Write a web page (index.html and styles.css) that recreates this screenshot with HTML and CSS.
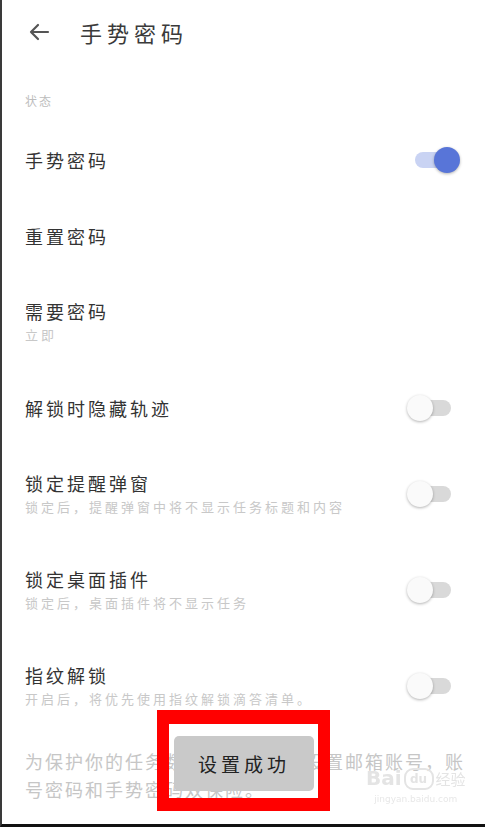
FILE: index.html
```html
<!DOCTYPE html>
<html lang="zh-CN">

<head>
    <meta charset="UTF-8">
    <title>手势密码</title>
    <meta name="viewport" content="width=device-width, initial-scale=1.0">
    <link rel="stylesheet" href="styles.css">
</head>

<body>
    <div class="screen">

        <!-- header -->
        <div class="topbar">
            <svg class="back" width="24" height="24" viewBox="0 0 24 24">
                <path d="M21 12H4M11 5l-7 7 7 7" fill="none" stroke="#555" stroke-width="2.2" stroke-linecap="round" stroke-linejoin="round" />
            </svg>
            <h1>手势密码</h1>
        </div>

        <div class="section-label">状态</div>

        <div class="row">
            <div class="row-text">
                <div class="row-title">手势密码</div>
            </div>
            <div class="switch on"><span class="track"></span><span class="thumb"></span></div>
        </div>

        <div class="row">
            <div class="row-text">
                <div class="row-title">重置密码</div>
            </div>
        </div>

        <div class="row double">
            <div class="row-text">
                <div class="row-title">需要密码</div>
                <div class="row-sub">立即</div>
            </div>
        </div>

        <div class="row">
            <div class="row-text">
                <div class="row-title">解锁时隐藏轨迹</div>
            </div>
            <div class="switch"><span class="track"></span><span class="thumb"></span></div>
        </div>

        <div class="row double">
            <div class="row-text">
                <div class="row-title">锁定提醒弹窗</div>
                <div class="row-sub">锁定后，提醒弹窗中将不显示任务标题和内容</div>
            </div>
            <div class="switch"><span class="track"></span><span class="thumb"></span></div>
        </div>

        <div class="row double">
            <div class="row-text">
                <div class="row-title">锁定桌面插件</div>
                <div class="row-sub">锁定后，桌面插件将不显示任务</div>
            </div>
            <div class="switch"><span class="track"></span><span class="thumb"></span></div>
        </div>

        <div class="row double">
            <div class="row-text">
                <div class="row-title">指纹解锁</div>
                <div class="row-sub">开启后，将优先使用指纹解锁滴答清单。</div>
            </div>
            <div class="switch"><span class="track"></span><span class="thumb"></span></div>
        </div>

        <p class="note">为保护你的任务数据安全，建议设置邮箱账号，账号密码和手势密码双保险。</p>
    </div>

    <!-- toast + annotation on top -->
    <div class="toast">设置成功</div>
    <div class="mark"></div>

    <div class="watermark">
        <div class="wm-logo">
            <span class="wm-bai">Bai</span>
            <span class="wm-paw">du</span>
            <span class="wm-jy">经验</span>
        </div>
        <div class="wm-url">jingyan.baidu.com</div>
    </div>
</body>

</html>
```

FILE: styles.css
```css
html,
body {
    margin: 0;
    height: 100%;
}

body {
    font-family: "Noto Sans CJK SC", "Noto Sans", sans-serif;
    background: #fff;
    color: #333;
    overflow: hidden;
}

.screen {
    height: 100vh;
    box-sizing: border-box;
    border-left: 2px solid #3a3a3a;
    border-bottom: 3px solid #111;
    overflow: hidden;
}

.topbar {
    height: 64px;
    display: flex;
    align-items: center;
    padding-left: 25px;
}

.back {
    margin-right: 29px;
}

h1 {
    margin: 0;
    font-size: 22px;
    font-weight: normal;
    letter-spacing: 5px;
    color: #3a3a3a;
}

.section-label {
    padding: 30px 0 14px 23px;
    font-size: 12px;
    line-height: 14px;
    letter-spacing: 2px;
    color: #bdbdbd;
}

.row {
    display: flex;
    align-items: center;
    justify-content: space-between;
    padding: 26px 24px 26px 23px;
}

.row.double {
    padding-top: 25px;
    padding-bottom: 26px;
}

.row-title {
    font-size: 18px;
    line-height: 24px;
    letter-spacing: 3px;
    color: #333;
}

.row-sub {
    margin-top: 3px;
    font-size: 13px;
    line-height: 18px;
    letter-spacing: 3px;
    color: #c8c8c8;
}

.switch {
    position: relative;
    width: 54px;
    height: 26px;
    margin: -1px 0;
    flex-shrink: 0;
}

.switch .track {
    position: absolute;
    left: 8px;
    right: 10px;
    top: 5px;
    height: 16px;
    border-radius: 8px;
    background: #d9d9d9;
}

.switch .thumb {
    position: absolute;
    left: 0;
    top: 0;
    width: 26px;
    height: 26px;
    border-radius: 50%;
    background: #fafafa;
    box-shadow: 0 1px 3px rgba(0, 0, 0, 0.3);
}

.switch.on .track {
    background: #c9d3f3;
}

.switch.on .thumb {
    left: 27px;
    background: #5875d8;
}

.note {
    margin: 0;
    padding: 13px 18px 0 23px;
    font-size: 18px;
    line-height: 28px;
    letter-spacing: 2px;
    color: #c6c6c6;
}

.toast {
    position: fixed;
    left: 174px;
    top: 736px;
    width: 140px;
    height: 55px;
    border-radius: 5px;
    background: #c9c9c9;
    color: #222;
    font-size: 19px;
    letter-spacing: 4px;
    display: flex;
    align-items: center;
    justify-content: center;
}

.mark {
    position: fixed;
    left: 157px;
    top: 710px;
    width: 173px;
    height: 101px;
    box-sizing: border-box;
    border: 12px solid #f00;
    border-top-width: 14px;
    border-bottom-width: 13px;
}

.watermark {
    position: fixed;
    left: 366px;
    top: 766px;
    white-space: nowrap;
    color: #e4e4e4;
    font-family: "DejaVu Sans", sans-serif;
}

.wm-logo {
    display: flex;
    align-items: flex-end;
    gap: 2px;
}

.wm-bai {
    font-size: 20px;
    font-weight: bold;
    line-height: 24px;
}

.wm-paw {
    width: 26px;
    height: 18px;
    border-radius: 9px;
    border: 2px solid #e4e4e4;
    font-size: 12px;
    font-weight: bold;
    line-height: 18px;
    text-align: center;
}

.wm-jy {
    font-family: "Noto Sans CJK SC", sans-serif;
    font-size: 15px;
    line-height: 22px;
}

.wm-url {
    margin-top: 4px;
    font-size: 9px;
    line-height: 10px;
    text-align: center;
    color: #e8e8e8;
}
```
